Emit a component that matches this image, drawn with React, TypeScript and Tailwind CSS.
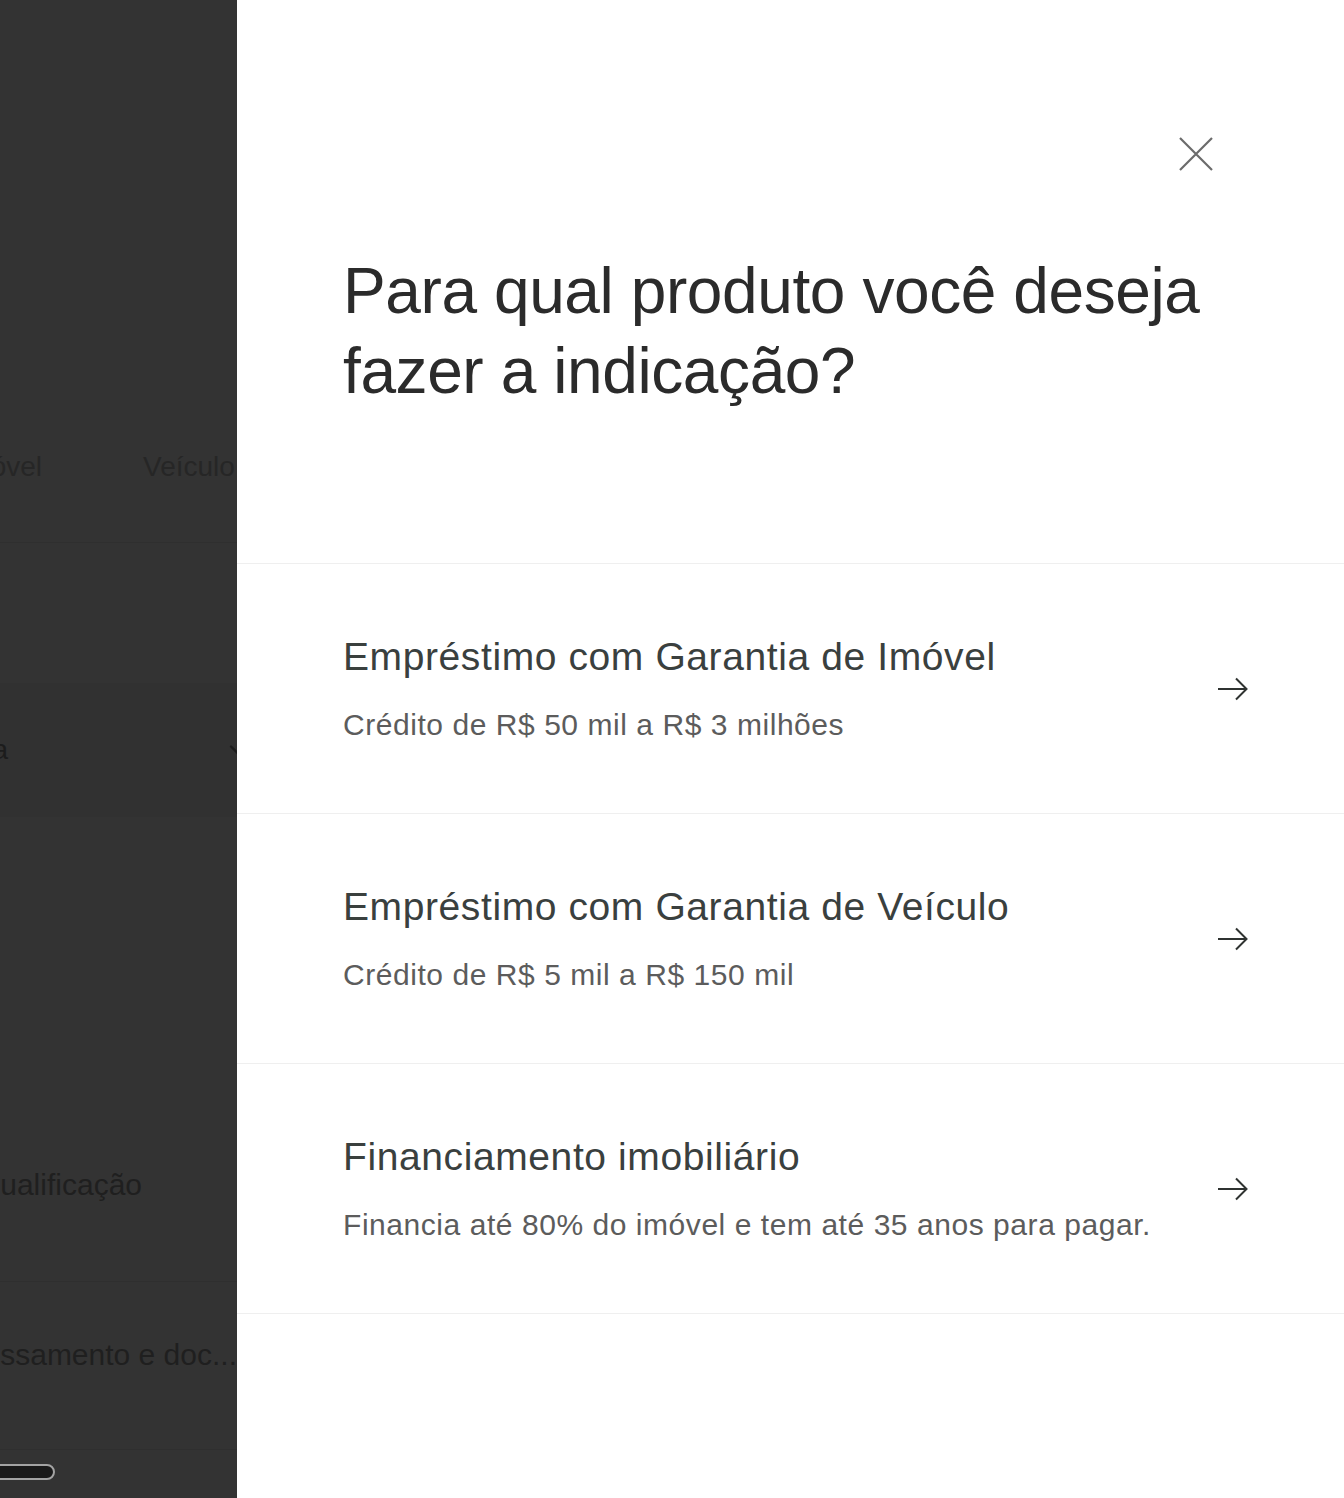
import { ChevronDown } from "lucide-react";

const products = [
  { title: "Empréstimo com Garantia de Imóvel", desc: "Crédito de R$ 50 mil a R$ 3 milhões" },
  { title: "Empréstimo com Garantia de Veículo", desc: "Crédito de R$ 5 mil a R$ 150 mil" },
  { title: "Financiamento imobiliário", desc: "Financia até 80% do imóvel e tem até 35 anos para pagar." },
];

function ArrowRight() {
  return (
    <svg width="32" height="24" viewBox="0 0 32 24" fill="none" stroke="#2f3331" strokeWidth="2">
      <path d="M1 12h29" />
      <path d="M19 1.5 29.5 12 19 22.5" />
    </svg>
  );
}

function CloseIcon() {
  return (
    <svg width="34" height="34" viewBox="0 0 34 34" fill="none" stroke="#6b6b6b" strokeWidth="2.2">
      <path d="M1 1l32 32M33 1 1 33" />
    </svg>
  );
}

// the page behind the drawer, dimmed
function DimmedPage() {
  return (
    <div className="w-[237px] shrink-0 bg-[#333333] overflow-hidden text-[#262626]">
      <div className="h-[430px]" />
      <div className="h-[113px] border-b border-[#2f2f2f] flex pt-[19px] text-[28px] leading-[36px]">
        <div className="w-[42px] shrink-0 flex justify-end whitespace-nowrap">
          <span>Imóvel</span>
        </div>
        <div className="ml-[101px] whitespace-nowrap">Veículo</div>
      </div>
      <div className="h-[140px]" />
      <div className="h-[134px] bg-[#313131] relative pt-[49px] text-[28px] leading-[36px] text-[#1c1c1c]">
        <div className="w-[8px] flex justify-end whitespace-nowrap">
          <span>Selecione a categoria</span>
        </div>
        <ChevronDown className="absolute left-[224px] top-[53px] w-[28px] h-[28px] text-[#1c1c1c]" strokeWidth={2} />
      </div>
      <div className="h-[323px]" />
      <div className="h-[142px] border-b border-[#2f2f2f] pt-[27px] text-[30px] leading-[36px] text-[#1f1f1f]">
        <div className="w-[142px] flex justify-end whitespace-nowrap">
          <span>Qualificação</span>
        </div>
      </div>
      <div className="h-[168px] border-b border-[#2f2f2f] pt-[55px] text-[30px] leading-[36px] text-[#1f1f1f]">
        <div className="w-[237px] flex justify-end whitespace-nowrap">
          <span>Processamento e doc...</span>
        </div>
      </div>
      <div className="pt-[14px]">
        <div className="w-[120px] ml-[-65px] h-[16px] rounded-full border-2 border-[#a3a3a3] bg-[#1a1a1a]" />
      </div>
    </div>
  );
}

export default function App() {
  return (
    <div
      className="flex w-[1344px] h-[1498px] overflow-hidden bg-white"
      style={{ fontFamily: '"Liberation Sans", Arial, sans-serif' }}
    >
      <DimmedPage />
      <div className="flex-1 bg-white">
        <div className="flex justify-end pt-[137px] pr-[131px]">
          <button type="button" aria-label="Fechar" className="w-[34px] h-[34px]">
            <CloseIcon />
          </button>
        </div>
        <h1 className="mt-[80px] pl-[106px] w-[1000px] text-[64px] leading-[80px] text-[#2b2b2b] tracking-[-0.4px]">
          Para qual produto você deseja fazer a indicação?
        </h1>
        <div className="mt-[152px] border-t border-[#efefef]">
          {products.map((p) => (
            <button
              key={p.title}
              type="button"
              className="w-full h-[250px] border-b border-[#efefef] flex items-center justify-between pl-[106px] pr-[95px] text-left"
            >
              <div>
                <div className="text-[39px] leading-[48px] text-[#3a403e] tracking-[0.6px]">{p.title}</div>
                <div className="mt-[24px] text-[30px] leading-[40px] text-[#5c5c5c] tracking-[0.55px]">{p.desc}</div>
              </div>
              <ArrowRight />
            </button>
          ))}
        </div>
      </div>
    </div>
  );
}
